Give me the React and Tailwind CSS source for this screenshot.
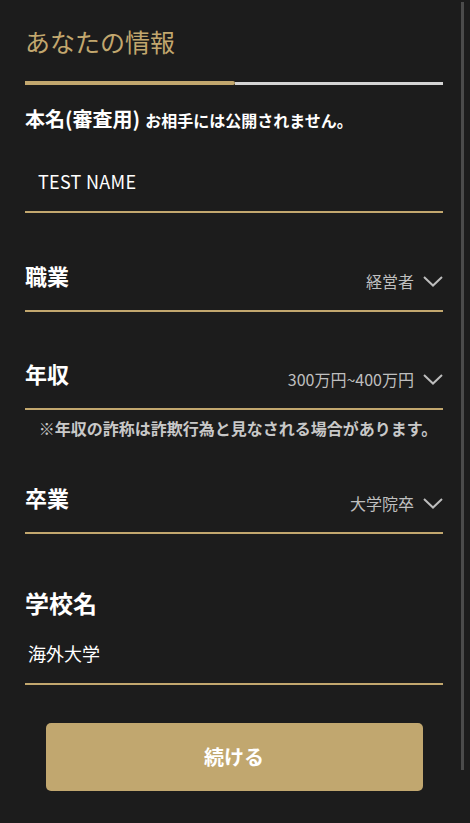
import React from "react";

function Chevron() {
  return (
    <svg width="20" height="11" viewBox="0 0 20 11" fill="none">
      <polyline points="1,1 10,9.5 19,1" stroke="#bdbdbd" strokeWidth="2" />
    </svg>
  );
}

function SelectRow({ label, value, className = "" }) {
  return (
    <div className={`flex items-end justify-between border-b-2 border-[#c2a76e] pb-[18px] ${className}`}>
      <span className="text-[22px] leading-[30px] font-bold text-white mb-[2px]">{label}</span>
      <div className="flex items-center gap-[9px] mb-[-1px]">
        <span className="text-[16px] leading-[24px] text-[#bfbfbf]">{value}</span>
        <Chevron />
      </div>
    </div>
  );
}

export default function App() {
  return (
    <div
      className="relative min-h-screen bg-[#1c1c1c] overflow-hidden"
      style={{ fontFamily: '"Noto Sans CJK JP", "Noto Sans", sans-serif' }}
    >
      <div className="pl-[25px] pr-[27px] pb-[33px]">
        <h1 className="pt-[25px] text-[25px] leading-[32px] font-normal text-[#c2a76e]">あなたの情報</h1>

        {/* progress */}
        <div className="mt-[24px] flex items-end h-[4px]">
          <div className="w-[210px] h-[4px] bg-[#c2a76e] rounded-r-[2px]" />
          <div className="flex-1 h-[3px] bg-[#d4d4d4]" />
        </div>

        <div className="mt-[20px] flex items-baseline gap-[5px] text-white">
          <span className="text-[20px] leading-[28px] font-bold">本名(審査用)</span>
          <span className="text-[16px] leading-[24px] font-bold">お相手には公開されません。</span>
        </div>

        <div className="pt-[34px] pb-[16px] pl-[13px] text-[18px] leading-[28px] tracking-[0.3px] text-white border-b-2 border-[#c2a76e]">
          TEST NAME
        </div>

        <SelectRow label="職業" value="経営者" className="mt-[47px]" />
        <SelectRow label="年収" value="300万円~400万円" className="mt-[46px]" />
        <p className="mt-[6px] pl-[8px] text-center text-[16px] leading-[24px] font-bold text-[#c8c8c8]">
          ※年収の詐称は詐欺行為と見なされる場合があります。
        </p>
        <SelectRow label="卒業" value="大学院卒" className="mt-[42px]" />

        <div className="mt-[53px] text-[24px] leading-[32px] font-bold text-white">学校名</div>
        <div className="pt-[20px] pb-[16px] pl-[3px] text-[18px] leading-[28px] text-white border-b-2 border-[#c2a76e]">
          海外大学
        </div>

        <div className="mt-[38px] flex justify-center">
          <button className="w-[377px] h-[68px] rounded-[5px] bg-[#c1a76f] text-white text-[20px] font-bold">
            続ける
          </button>
        </div>
      </div>

      {/* scrollbar thumb */}
      <div className="absolute top-[2px] left-[461px] w-[3px] h-[768px] bg-[#4b4b4b]" />
    </div>
  );
}
